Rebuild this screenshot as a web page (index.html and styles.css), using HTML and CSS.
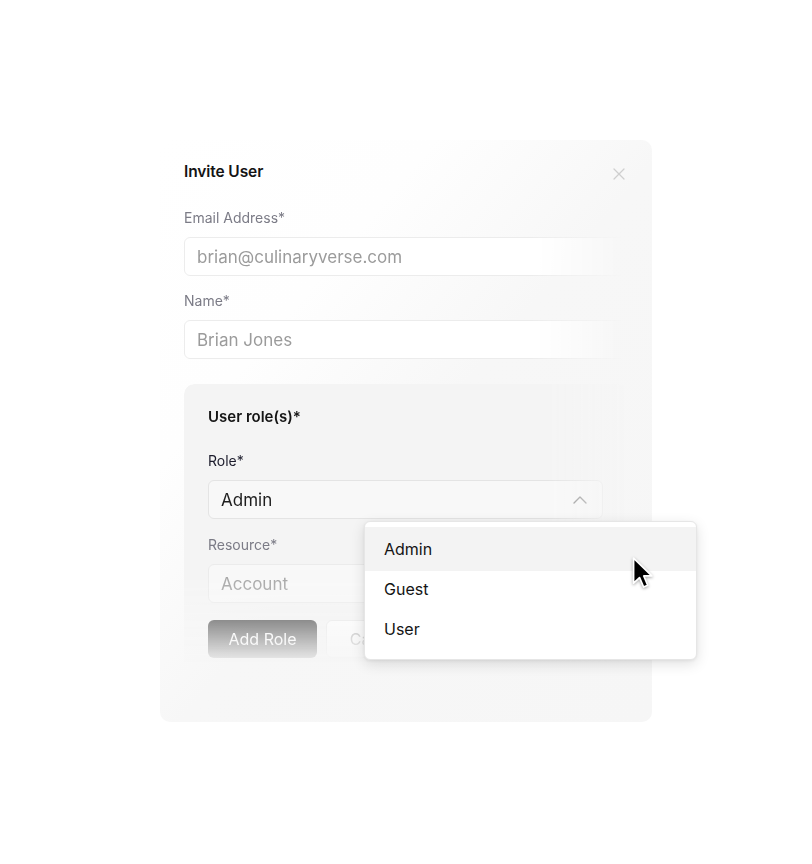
FILE: index.html
```html
<!DOCTYPE html>
<html lang="en">
<head>
<meta charset="utf-8">
<title>Invite User</title>
<link rel="stylesheet" href="styles.css">
</head>
<body>
<div class="stage">
  <div class="card">
    <div class="head">
      <h1 class="title">Invite User</h1>
      <svg class="close" width="14" height="14" viewBox="0 0 14 14" aria-hidden="true"><path d="M2 2 L12 12 M12 2 L2 12" stroke="#cfcfcf" stroke-width="1.3" fill="none" stroke-linecap="round"/></svg>
    </div>
    <div class="fields">
      <div class="field first">
        <div class="label">Email Address*</div>
        <div class="input">brian@culinaryverse.com</div>
      </div>
      <div class="field">
        <div class="label">Name*</div>
        <div class="input">Brian Jones</div>
      </div>
    </div>
    <div class="rolewrap">
      <div class="rolebox">
        <div class="rtitle">User role(s)*</div>
        <div class="field rfield">
          <div class="label dark">Role*</div>
          <div class="select">
            <span>Admin</span>
            <svg width="16" height="10" viewBox="0 0 16 10" aria-hidden="true"><path d="M2 8 L8 2 L14 8" stroke="#8a8a8a" stroke-width="1.4" fill="none" stroke-linecap="round" stroke-linejoin="round"/></svg>
          </div>
        </div>
        <div class="field sfield">
          <div class="label">Resource*</div>
          <div class="select light"><span>Account</span></div>
        </div>
        <div class="actions">
          <div class="btn primary">Add Role</div>
          <div class="btn secondary">Cancel</div>
        </div>
      </div>
    </div>
    <div class="menu">
      <div class="item active">Admin</div>
      <div class="item">Guest</div>
      <div class="item">User</div>
    </div>
    <svg class="cursor" width="22" height="34" viewBox="0 0 14 21" aria-hidden="true"><path d="M1 1 L1 17 L4.8 13.4 L7.4 19.4 L10 18.3 L7.5 12.4 L12.6 12.4 Z" fill="#000" stroke="#fff" stroke-width="1.1" stroke-linejoin="round"/></svg>
  </div>
</div>
</body>
</html>
```

FILE: styles.css
```css
* { box-sizing: border-box; }
html, body { margin: 0; background: #ffffff; }
body { font-family: Inter, "Noto Sans", sans-serif; }
.stage { padding: 140px 0 0 160px; min-height: 864px; }
.card {
  position: relative;
  width: 492px;
  height: 582px;
  border-radius: 10px;
  background: linear-gradient(to bottom right, #ffffff 0%, #fefefe 28%, #f7f7f7 52%, #f6f6f6 100%);
  padding: 22px 24px 0 24px;
}
.head { display: flex; justify-content: space-between; align-items: center; height: 20px; }
.title { margin: 0; font-size: 15.5px; font-weight: 600; color: #141414; line-height: 20px; letter-spacing: -0.1px; }
.close { margin: 4px 2px 0 0; }
.fields {
  -webkit-mask-image: linear-gradient(to right, #000 78%, transparent 99%);
  mask-image: linear-gradient(to right, #000 78%, transparent 99%);
}
.field { margin-top: 16px; }
.field.first { margin-top: 27px; }
.label { font-size: 14px; line-height: 18px; color: #7b7b86; margin-bottom: 10px; }
.label.dark { color: #1c1c2c; }
.input {
  height: 39px;
  border: 1px solid #ececec;
  border-radius: 6px;
  background: #ffffff;
  padding: 0 12px;
  display: flex;
  align-items: center;
  font-size: 17px;
  color: #9b9b9b;
}
.rolewrap {
  margin-top: 25px;
  -webkit-mask-image: linear-gradient(to right, #000 82%, transparent 100%);
  mask-image: linear-gradient(to right, #000 82%, transparent 100%);
}
.rolebox {
  background: #f4f4f4;
  border-radius: 10px;
  padding: 23px 25px 40px 24px;
  -webkit-mask-image: linear-gradient(to bottom, #000 0px, #000 192px, transparent 282px);
  mask-image: linear-gradient(to bottom, #000 0px, #000 192px, transparent 282px);
}
.rtitle { font-size: 15px; font-weight: 600; line-height: 20px; color: #151515; }
.rfield { margin-top: 25px; }
.sfield { margin-top: 17px; }
.select {
  height: 39px;
  border: 1px solid #e4e4e4;
  border-radius: 6px;
  background: #f8f8f8;
  padding: 0 14px 0 12px;
  display: flex;
  align-items: center;
  justify-content: space-between;
  font-size: 17px;
  color: #1e1e1e;
}
.select.light { color: #a6a6a6; border-color: #ebebeb; }
.actions { display: flex; gap: 9px; margin-top: 17px; }
.btn {
  height: 38px;
  border-radius: 6px;
  display: flex;
  align-items: center;
  justify-content: center;
  font-size: 16px;
}
.btn.primary { width: 109px; background: #262626; color: #ffffff; }
.btn.secondary { width: 100px; background: #ffffff; border: 1px solid #e6e6e6; color: #9a9a9a; }
.menu {
  position: absolute;
  left: 204px;
  top: 381px;
  width: 333px;
  height: 139px;
  background: #ffffff;
  border: 1px solid #e6e6e6;
  border-radius: 6px;
  box-shadow: 0 4px 14px rgba(0, 0, 0, 0.12), 0 1px 3px rgba(0, 0, 0, 0.06);
  padding-top: 5px;
}
.item {
  height: 40px;
  padding-left: 19px;
  display: flex;
  align-items: center;
  font-size: 16px;
  color: #141414;
}
.item.active { background: #f3f3f3; height: 44px; margin-bottom: -2px; }
.cursor { position: absolute; left: 472px; top: 416px; filter: drop-shadow(0 1px 1.5px rgba(0,0,0,0.35)); }
```
